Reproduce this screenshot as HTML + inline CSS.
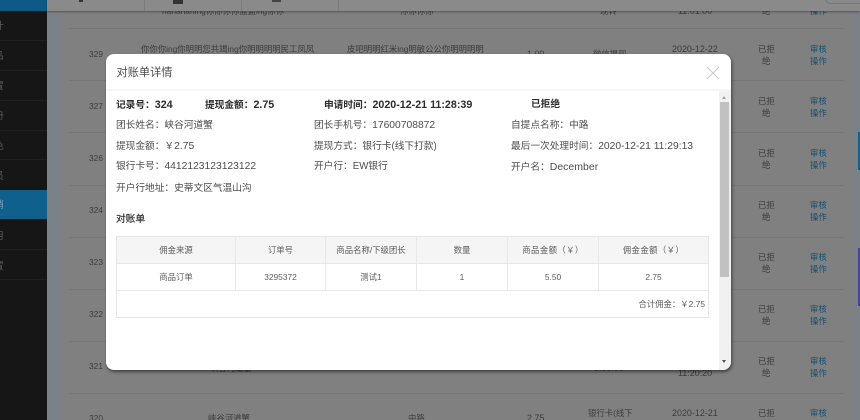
<!DOCTYPE html>
<html lang="zh">
<head>
<meta charset="utf-8">
<title>对账单详情</title>
<style>
*{box-sizing:border-box;margin:0;padding:0}
html,body{width:860px;height:420px;overflow:hidden;background:#808080}
body{position:relative;font-family:"Liberation Sans","Noto Sans CJK SC",sans-serif;font-size:9.7px;color:#444}
#wrap{position:absolute;left:0;top:0;width:860px;height:420px;overflow:hidden;filter:blur(.25px)}
.a{position:absolute;white-space:nowrap}
.b{position:absolute}
.line{position:absolute;left:69px;width:775px;height:1px;background:#777}
.bg{color:#3c3c3c;font-size:8.4px;line-height:12.3px}
.d{font-size:8.95px}
.s{color:#5c5c5c}
.jue{margin-left:4px}
.link{color:#164f70;font-size:8.4px;line-height:12.3px}
#modal{position:absolute;left:106px;top:54px;width:625px;height:316px;background:#fff;border-radius:8px;box-shadow:1px 2px 3px rgba(0,0,0,.5);overflow:hidden;z-index:5}
#modal .a{color:#4c4c4c}
#modal .k{color:#2c2c2c;font-weight:bold}
.n{font-size:10.3px}
.m{font-size:10.7px}
.cell{position:absolute;display:flex;align-items:center;justify-content:center;font-size:8.4px;color:#5c5c5c;height:26px;white-space:nowrap}
#top{position:absolute;left:47px;top:0;width:813px;height:11px;background:#8a8a8a;box-shadow:0 1px 2px rgba(0,0,0,.35);z-index:3}
</style>
</head>
<body>
<div id="wrap">
<div class="b" style="left:0;top:0;width:47px;height:420px;background:#161616"></div>
<div class="b" style="left:0;top:0;width:47px;height:11px;background:#0d5a88"></div>
<div class="b" style="left:0;top:190px;width:47px;height:29px;background:#10608e"></div>
<div class="b" style="left:0;top:40px;width:47px;height:1px;background:#1f1f1f"></div>
<div class="b" style="left:0;top:70px;width:47px;height:1px;background:#1f1f1f"></div>
<div class="b" style="left:0;top:100px;width:47px;height:1px;background:#1f1f1f"></div>
<div class="b" style="left:0;top:130px;width:47px;height:1px;background:#1f1f1f"></div>
<div class="b" style="left:0;top:159px;width:47px;height:1px;background:#1f1f1f"></div>
<div class="b" style="left:0;top:249px;width:47px;height:1px;background:#1f1f1f"></div>
<div class="b" style="left:0;top:279px;width:47px;height:1px;background:#1f1f1f"></div>
<div class="a s" style="left:-6px;top:18px">计</div>
<div class="a s" style="left:-6px;top:48px">品</div>
<div class="a s" style="left:-6px;top:78px">置</div>
<div class="a s" style="left:-6px;top:108px">册</div>
<div class="a s" style="left:-6px;top:138px">色</div>
<div class="a s" style="left:-6px;top:168px">员</div>
<div class="a" style="left:-6px;top:197px;color:#7fa4ba">销</div>
<div class="a s" style="left:-6px;top:228px">用</div>
<div class="a s" style="left:-6px;top:258px">置</div>

<div class="b" style="left:47px;top:11px;width:14px;height:409px;background:#7b8287"></div>
<div class="b" style="left:852px;top:11px;width:8px;height:409px;background:#7c8186"></div>
<div id="top"></div>
<div class="b" style="left:144px;top:0;width:1px;height:11px;background:#7c7c7c;z-index:4"></div>
<div class="b" style="left:241px;top:0;width:1px;height:11px;background:#7c7c7c;z-index:4"></div>
<div class="b" style="left:338px;top:0;width:1px;height:11px;background:#7c7c7c;z-index:4"></div>
<div class="b" style="left:825px;top:-6px;width:40px;height:10px;border:1px solid #5d7f95;border-radius:5px;z-index:4"></div>
<div class="b" style="left:79px;top:0;width:4px;height:2px;background:#333;z-index:4"></div>
<div class="b" style="left:173px;top:0;width:10px;height:4px;background:#333;z-index:4"></div>
<div class="b" style="left:272px;top:0;width:9px;height:2px;background:#444;z-index:4"></div>
<div class="b" style="left:858px;top:132px;width:2px;height:38px;background:#145e8e"></div>
<div class="b" style="left:858px;top:248px;width:2px;height:58px;background:#4a3f9a"></div>

<div class="line" style="top:28px"></div>
<div class="line" style="top:80px"></div>
<div class="line" style="top:132px"></div>
<div class="line" style="top:185px"></div>
<div class="line" style="top:237px"></div>
<div class="line" style="top:289px"></div>
<div class="line" style="top:341px"></div>
<div class="line" style="top:393px"></div>

<div class="a bg" style="left:162px;top:5px">nanananing你你你你蓝蓝ing你你</div>
<div class="a bg" style="left:400px;top:5px">你你你你</div>
<div class="a bg" style="left:600px;top:5px">现转</div>
<div class="a bg d" style="left:678px;top:5px">11:01:00</div>
<div class="a bg" style="left:762px;top:5px">绝</div>
<div class="a link" style="left:810px;top:5px">操作</div>

<div class="a bg" style="left:89px;top:48px">329</div>
<div class="a bg" style="left:141px;top:43px">你你你ing你明明您共竭ing你明明明明民工凤凤</div>
<div class="a bg" style="left:347px;top:43px">皮吧明明红米ing明敏公公你明明明明</div>
<div class="a bg d" style="left:527px;top:48px">1.00</div>
<div class="a bg" style="left:593px;top:48px">微信提现</div>
<div class="a bg d" style="left:672px;top:43px">2020-12-22</div>
<div class="a bg" style="left:758px;top:43px">已拒<br><span class="jue">绝</span></div>
<div class="a link" style="left:810px;top:43px">审核<br>操作</div>

<div class="a bg" style="left:89px;top:100px">327</div>
<div class="a bg" style="left:758px;top:95px">已拒<br><span class="jue">绝</span></div>
<div class="a link" style="left:810px;top:95px">审核<br>操作</div>
<div class="a bg" style="left:89px;top:152px">326</div>
<div class="a bg" style="left:758px;top:147px">已拒<br><span class="jue">绝</span></div>
<div class="a link" style="left:810px;top:147px">审核<br>操作</div>
<div class="a bg" style="left:89px;top:204px">324</div>
<div class="a bg" style="left:758px;top:199px">已拒<br><span class="jue">绝</span></div>
<div class="a link" style="left:810px;top:199px">审核<br>操作</div>
<div class="a bg" style="left:89px;top:256px">323</div>
<div class="a bg" style="left:758px;top:251px">已拒<br><span class="jue">绝</span></div>
<div class="a link" style="left:810px;top:251px">审核<br>操作</div>
<div class="a bg" style="left:89px;top:308px">322</div>
<div class="a bg" style="left:758px;top:303px">已拒<br><span class="jue">绝</span></div>
<div class="a link" style="left:810px;top:303px">审核<br>操作</div>
<div class="a bg" style="left:89px;top:360px">321</div>
<div class="a bg" style="left:210px;top:362px">峡谷河道蟹</div>
<div class="a bg d" style="left:594px;top:362px">9:00:00</div>
<div class="a bg d" style="left:678px;top:367px">11:20:20</div>
<div class="a bg" style="left:758px;top:355px">已拒<br><span class="jue">绝</span></div>
<div class="a link" style="left:810px;top:355px">审核<br>操作</div>
<div class="a bg" style="left:89px;top:412px">320</div>
<div class="a bg" style="left:208px;top:412px">峡谷河道蟹</div>
<div class="a bg" style="left:408px;top:412px">中路</div>
<div class="a bg d" style="left:527px;top:412px">2.75</div>
<div class="a bg" style="left:588px;top:407px">银行卡(线下</div>
<div class="a bg d" style="left:672px;top:407px">2020-12-21</div>
<div class="a bg" style="left:758px;top:407px">已拒</div>
<div class="a link" style="left:810px;top:407px">审核</div>

<div id="modal">
  <div class="a" style="left:10.5px;top:12px;font-size:11.2px;line-height:15px">对账单详情</div>
  <svg class="b" style="left:600px;top:12px" width="14" height="14" viewBox="0 0 14 14"><path d="M1 1L13 13M13 1L1 13" stroke="#c9c9c9" stroke-width="1.1" fill="none"/></svg>
  <div class="b" style="left:0;top:35px;width:625px;height:2px;background:#f6f6f6"></div>

  <div class="a k" style="left:10px;top:45px;line-height:12px">记录号：<span class="m">324</span></div>
  <div class="a k" style="left:99px;top:45px;line-height:12px">提现金额：<span class="m">2.75</span></div>
  <div class="a k" style="left:218px;top:45px;line-height:12px">申请时间：<span class="m">2020-12-21 11:28:39</span></div>
  <div class="a k" style="left:425px;top:45px;line-height:12px">已拒绝</div>

  <div class="a" style="left:10px;top:66px;line-height:12px">团长姓名：峡谷河道蟹</div>
  <div class="a" style="left:208px;top:66px;line-height:12px">团长手机号：<span class="n">17600708872</span></div>
  <div class="a" style="left:405px;top:66px;line-height:12px">自提点名称：中路</div>

  <div class="a" style="left:10px;top:87px;line-height:12px">提现金额：￥<span class="n">2.75</span></div>
  <div class="a" style="left:208px;top:87px;line-height:12px">提现方式：银行卡(线下打款)</div>
  <div class="a" style="left:405px;top:87px;line-height:12px">最后一次处理时间：<span class="n">2020-12-21 11:29:13</span></div>

  <div class="a" style="left:10px;top:107px;line-height:12px">银行卡号：<span class="n">4412123123123122</span></div>
  <div class="a" style="left:208px;top:107px;line-height:12px">开户行：EW银行</div>
  <div class="a" style="left:405px;top:107px;line-height:12px">开户名：<span style="font-size:10.5px">December</span></div>

  <div class="a" style="left:10px;top:129px;line-height:12px">开户行地址：史蒂文区气温山沟</div>

  <div class="a" style="left:10px;top:160px;line-height:12px;font-size:9.7px;-webkit-text-stroke:.2px #333;color:#333">对账单</div>

  <!-- table -->
  <div class="b" style="left:10px;top:182px;width:593px;height:82px;border:1px solid #e6e6e6"></div>
  <div class="b" style="left:11px;top:183px;width:591px;height:26px;background:#f5f5f5"></div>
  <div class="b" style="left:11px;top:209px;width:591px;height:1px;background:#e8e8ec"></div>
  <div class="b" style="left:11px;top:236px;width:591px;height:1px;background:#e8e8ec"></div>
  <div class="b" style="left:129px;top:183px;width:1px;height:53px;background:#e8e8ec"></div>
  <div class="b" style="left:219px;top:183px;width:1px;height:53px;background:#e8e8ec"></div>
  <div class="b" style="left:310px;top:183px;width:1px;height:53px;background:#e8e8ec"></div>
  <div class="b" style="left:401px;top:183px;width:1px;height:53px;background:#e8e8ec"></div>
  <div class="b" style="left:492px;top:183px;width:1px;height:53px;background:#e8e8ec"></div>

  <div class="cell" style="left:11px;top:183px;width:118px">佣金来源</div>
  <div class="cell" style="left:130px;top:183px;width:89px">订单号</div>
  <div class="cell" style="left:220px;top:183px;width:90px">商品名称/下级团长</div>
  <div class="cell" style="left:311px;top:183px;width:90px">数量</div>
  <div class="cell" style="left:402px;top:183px;width:90px;letter-spacing:.4px">商品金额（￥）</div>
  <div class="cell" style="left:493px;top:183px;width:109px;letter-spacing:.4px">佣金金额（￥）</div>

  <div class="cell" style="left:11px;top:210px;width:118px">商品订单</div>
  <div class="cell" style="left:130px;top:210px;width:89px">3295372</div>
  <div class="cell" style="left:220px;top:210px;width:90px">测试1</div>
  <div class="cell" style="left:311px;top:210px;width:90px">1</div>
  <div class="cell" style="left:402px;top:210px;width:90px">5.50</div>
  <div class="cell" style="left:493px;top:210px;width:109px">2.75</div>
  <div class="cell" style="left:402px;top:237px;width:197px;justify-content:flex-end">合计佣金：￥2.75</div>

  <!-- scrollbar -->
  <div class="b" style="left:613px;top:37px;width:12px;height:279px;background:#f1f1f1"></div>
  <div class="b" style="left:614px;top:48px;width:9px;height:175px;background:#c1c1c1"></div>
  <div class="b" style="left:616px;top:42px;width:0;height:0;border-left:2.5px solid transparent;border-right:2.5px solid transparent;border-bottom:3px solid #a3a3a3"></div>
  <div class="b" style="left:616px;top:306px;width:0;height:0;border-left:2.5px solid transparent;border-right:2.5px solid transparent;border-top:3px solid #505050"></div>
</div>
</div>
</body>
</html>
